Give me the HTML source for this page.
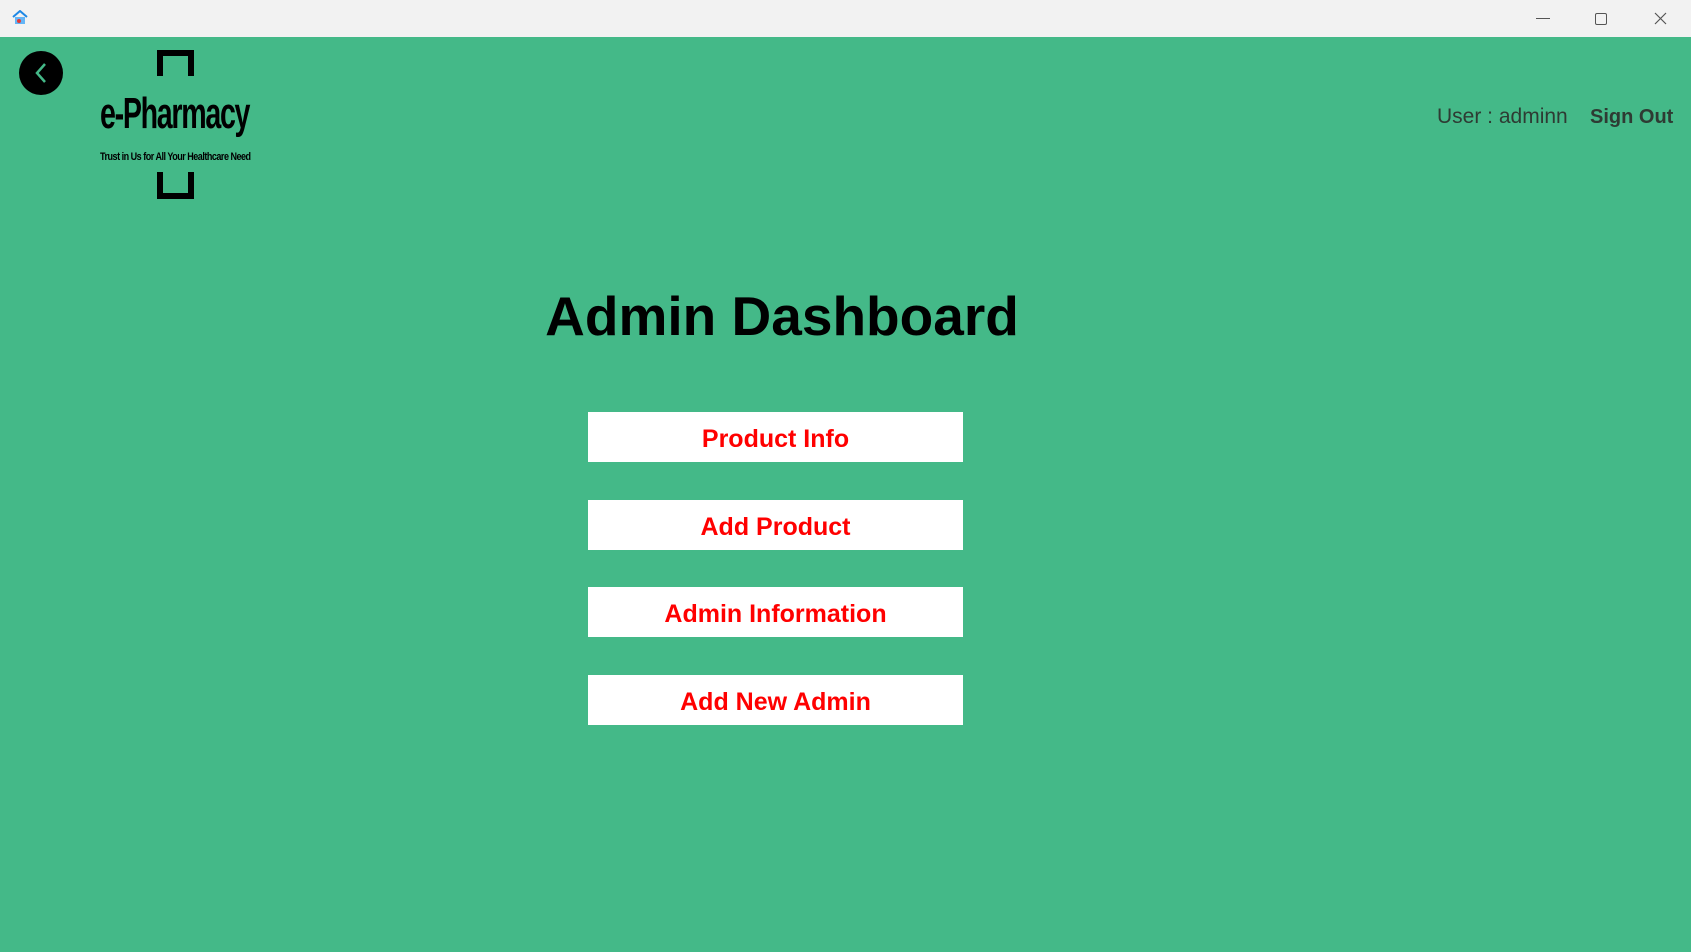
<!DOCTYPE html>
<html><head><meta charset="utf-8"><style>
html,body{margin:0;padding:0;width:1691px;height:952px;overflow:hidden;background:#44b988;font-family:"Liberation Sans",sans-serif}
.tb{position:absolute;left:0;top:0;width:1691px;height:37px;background:#f2f2f2}
.abs{position:absolute}
.btn{position:absolute;left:588px;width:375px;height:50px;background:#fff;color:#f00;font-weight:bold;font-size:25px;text-align:center;line-height:54px}
</style></head><body>
<div class="tb">
<svg class="abs" style="left:12px;top:10px" width="16" height="15" viewBox="0 0 16 15"><path d="M1 7L8 1L15 7" stroke="#1e88e5" stroke-width="2" fill="none"/><rect x="3" y="7" width="10" height="7" fill="#64b5f6"/><circle cx="7" cy="11" r="2" fill="#e53935"/></svg>
<div class="abs" style="left:1536px;top:18px;width:14px;height:1px;background:#555"></div>
<div class="abs" style="left:1595px;top:13px;width:10px;height:10px;border:1px solid #555;border-radius:2px"></div>
<svg class="abs" style="left:1654px;top:12px" width="13" height="13"><path d="M1 1L12 12M12 1L1 12" stroke="#555" stroke-width="1.2"/></svg>
</div>
<svg class="abs" style="left:19px;top:51px" width="44" height="44"><circle cx="22" cy="22" r="22" fill="#000"/><path d="M26 13L18 22L26 31" stroke="#44b988" stroke-width="2.5" fill="none"/></svg>
<svg class="abs" style="left:157px;top:50px" width="37" height="150"><path d="M3 26V3H34V26" stroke="#000" stroke-width="6" fill="none"/><path d="M3 122V146H34V122" stroke="#000" stroke-width="6" fill="none"/></svg>
<div class="abs" style="left:100px;top:89px;font-size:44px;font-weight:bold;letter-spacing:-2px;transform:scaleX(0.65);transform-origin:left;width:240px">e-Pharmacy</div>
<div class="abs" style="left:100px;top:151px;font-size:11px;font-weight:bold;letter-spacing:-0.6px;white-space:nowrap;transform:scaleX(0.82);transform-origin:left">Trust in Us for All Your Healthcare Need</div>
<div class="abs" style="left:1437px;top:105px;font-size:21px;color:#2e3b33">User : adminn</div>
<div class="abs" style="left:1590px;top:106px;font-size:20px;font-weight:bold;color:#2e3b33">Sign Out</div>
<div class="abs" style="left:537px;top:284px;width:490px;text-align:center;font-size:55px;font-weight:bold;color:#000">Admin Dashboard</div>
<div class="btn" style="top:412px">Product Info</div>
<div class="btn" style="top:500px">Add Product</div>
<div class="btn" style="top:587px">Admin Information</div>
<div class="btn" style="top:675px">Add New Admin</div>
</body></html>
